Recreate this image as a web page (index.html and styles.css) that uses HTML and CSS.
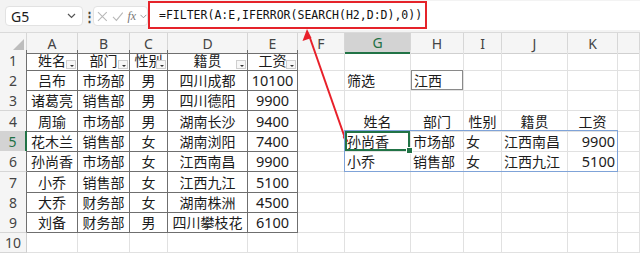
FILE: index.html
```html
<!DOCTYPE html>
<html lang="zh-CN">
<head>
  <meta charset="UTF-8" />
  <title>FILTER</title>
  <link rel="stylesheet" href="styles.css">
</head>
<body>

  <!-- Formula bar -->
  <div class="toolbar">
    <div class="namebox">
      <span>G5</span>
      <svg class="chev" width="9" height="6" viewBox="0 0 9 6"><path d="M1 1l3.5 3.5L8 1" fill="none" stroke="#555" stroke-width="1.2"/></svg>
    </div>
    <div class="dots">⋮</div>
    <div class="fxbox">
      <svg width="11" height="11" viewBox="0 0 11 11"><path d="M1 1l9 9M10 1l-9 9" stroke="#b8b8b8" stroke-width="1.1"/></svg>
      <svg width="12" height="11" viewBox="0 0 12 11"><path d="M1 6l3.5 3.5L11 1.5" fill="none" stroke="#b8b8b8" stroke-width="1.1"/></svg>
      <span class="fx">fx</span>
      <svg width="7" height="5" viewBox="0 0 7 5"><path d="M.5 .8l3 3 3-3" fill="none" stroke="#999" stroke-width="1"/></svg>
    </div>
    <div class="formula">
      <div class="formula-hl">=FILTER(A:E,IFERROR(SEARCH(H2,D:D),0))</div>
    </div>
  </div>

  <!-- Sheet -->
  <div class="sheet">
    <div class="row colhead">
      <div class="c corner"><span class="tri"></span></div>
      <div class="c tt">A</div><div class="c tt">B</div><div class="c tt">C</div><div class="c tt">D</div><div class="c tt">E</div>
      <div class="c">F</div><div class="c cursel">G</div><div class="c">H</div><div class="c">I</div><div class="c">J</div><div class="c">K</div><div class="c"></div>
    </div>

    <div class="row">
      <div class="c rh tl">1</div>
      <div class="c t hd">姓名<i class="fb"></i></div><div class="c t hd">部门<i class="fb"></i></div><div class="c t hd">性别<i class="fb"></i></div><div class="c t hd">籍贯<i class="fb"></i></div><div class="c t hd">工资<i class="fb"></i></div>
      <div class="c"></div><div class="c"></div><div class="c"></div><div class="c"></div><div class="c"></div><div class="c"></div><div class="c"></div>
    </div>
    <div class="row">
      <div class="c rh tl">2</div>
      <div class="c t">吕布</div><div class="c t">市场部</div><div class="c t">男</div><div class="c t">四川成都</div><div class="c t num">10100</div>
      <div class="c"></div><div class="c left">筛选</div><div class="c left crit">江西</div><div class="c"></div><div class="c"></div><div class="c"></div><div class="c"></div>
    </div>
    <div class="row tall">
      <div class="c rh tl">3</div>
      <div class="c t">诸葛亮</div><div class="c t">销售部</div><div class="c t">男</div><div class="c t">四川德阳</div><div class="c t num">9900</div>
      <div class="c"></div><div class="c"></div><div class="c"></div><div class="c"></div><div class="c"></div><div class="c"></div><div class="c"></div>
    </div>
    <div class="row">
      <div class="c rh tl">4</div>
      <div class="c t">周瑜</div><div class="c t">市场部</div><div class="c t">男</div><div class="c t">湖南长沙</div><div class="c t num">9400</div>
      <div class="c"></div><div class="c">姓名</div><div class="c">部门</div><div class="c">性别</div><div class="c">籍贯</div><div class="c">工资</div><div class="c"></div>
    </div>
    <div class="row">
      <div class="c rh tl rsel">5</div>
      <div class="c t">花木兰</div><div class="c t">销售部</div><div class="c t">女</div><div class="c t">湖南浏阳</div><div class="c t num">7400</div>
      <div class="c"></div>
      <div class="c left active">孙尚香<span class="spill"></span><span class="handle"></span></div>
      <div class="c left">市场部</div><div class="c left">女</div><div class="c left">江西南昌</div><div class="c right num">9900</div><div class="c"></div>
    </div>
    <div class="row tall">
      <div class="c rh tl">6</div>
      <div class="c t">孙尚香</div><div class="c t">市场部</div><div class="c t">女</div><div class="c t">江西南昌</div><div class="c t num">9900</div>
      <div class="c"></div><div class="c left">小乔</div><div class="c left">销售部</div><div class="c left">女</div><div class="c left">江西九江</div><div class="c right num">5100</div><div class="c"></div>
    </div>
    <div class="row">
      <div class="c rh tl">7</div>
      <div class="c t">小乔</div><div class="c t">销售部</div><div class="c t">女</div><div class="c t">江西九江</div><div class="c t num">5100</div>
      <div class="c"></div><div class="c"></div><div class="c"></div><div class="c"></div><div class="c"></div><div class="c"></div><div class="c"></div>
    </div>
    <div class="row">
      <div class="c rh tl">8</div>
      <div class="c t">大乔</div><div class="c t">财务部</div><div class="c t">女</div><div class="c t">湖南株洲</div><div class="c t num">4500</div>
      <div class="c"></div><div class="c"></div><div class="c"></div><div class="c"></div><div class="c"></div><div class="c"></div><div class="c"></div>
    </div>
    <div class="row tall">
      <div class="c rh tl">9</div>
      <div class="c t">刘备</div><div class="c t">财务部</div><div class="c t">男</div><div class="c t">四川攀枝花</div><div class="c t num">6100</div>
      <div class="c"></div><div class="c"></div><div class="c"></div><div class="c"></div><div class="c"></div><div class="c"></div><div class="c"></div>
    </div>
    <div class="row">
      <div class="c rh">10</div>
      <div class="c"></div><div class="c"></div><div class="c"></div><div class="c"></div><div class="c"></div>
      <div class="c"></div><div class="c"></div><div class="c"></div><div class="c"></div><div class="c"></div><div class="c"></div><div class="c"></div>
    </div>
  </div>

  <!-- annotation arrow -->
  <svg class="arrow" width="640" height="253" viewBox="0 0 640 253">
    <path d="M346 141L310 38" stroke="#e8202a" stroke-width="2" fill="none"/>
    <path d="M307 29l-4.5 12 9-3z" fill="#e8202a"/>
    <path d="M344 136l3 6" stroke="#e8202a" stroke-width="3"/>
  </svg>

</body>
</html>
```

FILE: styles.css
```css
body {
  margin: 0;
  width: 640px;
  height: 253px;
  overflow: hidden;
  background: #fff;
  font-family: "Noto Sans", "Noto Sans CJK SC", sans-serif;
  color: #1b1b1b;
  position: relative;
}

/* formula bar */
.toolbar {
  height: 33px;
  background: #f3f3f3;
  display: flex;
  align-items: center;
  box-sizing: border-box;
  border-bottom: 1px solid #dadada;
}
.namebox {
  margin-left: 5px;
  width: 78px;
  height: 20px;
  background: #fff;
  border: 1px solid #e2e2e2;
  border-radius: 4px;
  box-sizing: border-box;
  display: flex;
  align-items: center;
  justify-content: space-between;
  padding: 0 6px 0 5px;
  font-size: 14px;
}
.dots {
  width: 10px;
  text-align: center;
  font-size: 13px;
  color: #444;
  font-weight: bold;
}
.fxbox {
  width: 55px;
  height: 20px;
  background: #fff;
  border: 1px solid #e2e2e2;
  border-radius: 4px;
  box-sizing: border-box;
  display: flex;
  align-items: center;
  gap: 4px;
  padding-left: 3px;
}
.fx {
  font-family: "Liberation Serif", serif;
  font-style: italic;
  font-size: 12px;
  color: #777;
}
.formula {
  flex: 1;
  align-self: flex-start;
  margin-top: 1px;
  height: 29px;
  background: #fff;
  display: flex;
}
.formula-hl {
  width: 279px;
  height: 28px;
  border: 2px solid #e5232a;
  box-sizing: border-box;
  padding-left: 9px;
  display: flex;
  align-items: center;
  font-family: "DejaVu Sans Mono", monospace;
  font-size: 11.5px;
  color: #111;
}

/* sheet grid */
.sheet {
  position: relative;
}
.row {
  display: grid;
  grid-template-columns: 27px 51px 52px 38px 80px 50px 47px 66px 53px 38px 66px 50px 22px;
  height: 20px;
}
.row.tall {
  height: 21px;
}
.c {
  box-sizing: border-box;
  border-right: 1px solid #e1e1e1;
  border-bottom: 1px solid #e1e1e1;
  display: flex;
  align-items: center;
  justify-content: center;
  font-size: 14px;
  white-space: nowrap;
  position: relative;
}
.num {
  font-size: 14.5px;
}
.left {
  justify-content: flex-start;
  padding-left: 2px;
}
.right {
  justify-content: flex-end;
  padding-right: 2px;
}

.colhead {
  height: 17px;
}
.colhead .c {
  background: #f5f5f5;
  border-right-color: #d6d6d6;
  border-bottom-color: #d0d0d0;
  color: #444;
  font-size: 14px;
}
.colhead .c.tt {
  border-bottom-color: #6f6f6f;
}
.colhead .cursel {
  background: #d3d3d3;
  color: #1e7145;
  border-bottom: 2px solid #217346;
}
.corner .tri {
  position: absolute;
  right: 2px;
  bottom: 2px;
  border-left: 12px solid transparent;
  border-bottom: 12px solid #bdbdbd;
}

.rh {
  background: #f5f5f5;
  color: #444;
  border-bottom-color: #d6d6d6;
  border-right-color: #cfcfcf;
}
.rh.tl {
  border-right-color: #6f6f6f;
}
.rh.rsel {
  background: #d3d3d3;
  color: #1e7145;
  border-right: 2px solid #217346;
}

/* source table */
.t {
  border-right-color: #6f6f6f;
  border-bottom-color: #6f6f6f;
}
.fb {
  position: absolute;
  right: 1px;
  bottom: 1px;
  width: 10px;
  height: 9px;
  box-sizing: border-box;
  border: 1px solid #cfcfcf;
  background: #f7f7f7;
}
.fb::after {
  content: "";
  position: absolute;
  left: 3px;
  top: 4px;
  border-left: 2px solid transparent;
  border-right: 2px solid transparent;
  border-top: 2px solid #333;
}

.crit {
  box-shadow: inset 0 0 0 1px #8a8a8a;
  padding-left: 3px;
}

/* selection */
.active {
  box-shadow: inset 0 0 0 2px #217346;
  z-index: 2;
}
.spill {
  position: absolute;
  left: -1px;
  top: -1px;
  width: 274px;
  height: 42px;
  border: 1px solid #7fa3d8;
  box-sizing: border-box;
  pointer-events: none;
}
.handle {
  position: absolute;
  right: -3px;
  bottom: -3px;
  width: 5px;
  height: 5px;
  background: #217346;
  border: 1px solid #fff;
}

.arrow {
  position: absolute;
  left: 0;
  top: 0;
  pointer-events: none;
}
```
